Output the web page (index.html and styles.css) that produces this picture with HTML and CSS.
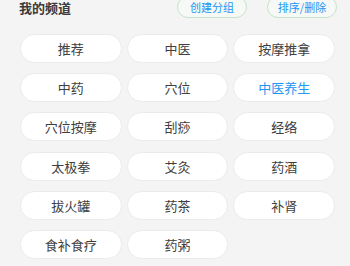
FILE: index.html
```html
<!DOCTYPE html>
<html lang="zh-CN">
<head>
    <meta charset="UTF-8">
    <meta name="viewport" content="width=device-width, initial-scale=1.0">
    <title>我的频道</title>
    <link rel="stylesheet" href="styles.css">
</head>
<body>
    <div class="channel-head">
        <span class="channel-title">我的频道</span>
        <div class="head-actions">
            <button class="ghost-btn">创建分组</button>
            <button class="ghost-btn">排序/删除</button>
        </div>
    </div>

    <div class="channel-grid">
        <div class="chip">推荐</div>
        <div class="chip">中医</div>
        <div class="chip">按摩推拿</div>
        <div class="chip">中药</div>
        <div class="chip">穴位</div>
        <div class="chip active">中医养生</div>
        <div class="chip">穴位按摩</div>
        <div class="chip">刮痧</div>
        <div class="chip">经络</div>
        <div class="chip">太极拳</div>
        <div class="chip">艾灸</div>
        <div class="chip">药酒</div>
        <div class="chip">拔火罐</div>
        <div class="chip">药茶</div>
        <div class="chip">补肾</div>
        <div class="chip">食补食疗</div>
        <div class="chip">药粥</div>
    </div>
</body>
</html>
```

FILE: styles.css
```css
body {
    margin: 0;
    padding: 0;
    background: #f4f4f4;
    color: #333;
    font-family: "Noto Sans CJK SC", "Noto Sans", sans-serif;
    overflow: hidden;
}
.channel-head {
    display: flex;
    align-items: center;
    justify-content: space-between;
    height: 22px;
    margin-top: -4px;
    padding: 0 13px 0 19px;
}
.channel-title {
    font-size: 13px;
    line-height: 14px;
    margin-top: 1px;
    font-weight: bold;
    color: #3a3a3a;
}
.head-actions {
    display: flex;
    gap: 20px;
}
.ghost-btn {
    width: 70px;
    height: 22px;
    padding: 0;
    border: 1px solid #c6e4cd;
    border-radius: 11px;
    background: #f7f9f7;
    color: #2196f3;
    font-family: inherit;
    font-size: 11px;
    line-height: 20px;
}
.channel-grid {
    display: grid;
    grid-template-columns: repeat(3, 1fr);
    column-gap: 5px;
    row-gap: 10.2px;
    padding: 16px 15px 0 20px;
}
.chip {
    height: 29px;
    box-sizing: border-box;
    border: 1px solid #ebebeb;
    border-radius: 15px;
    background: #fff;
    font-size: 13px;
    line-height: 27px;
    text-align: center;
    color: #404040;
}
.chip.active {
    color: #2196f3;
}
```
